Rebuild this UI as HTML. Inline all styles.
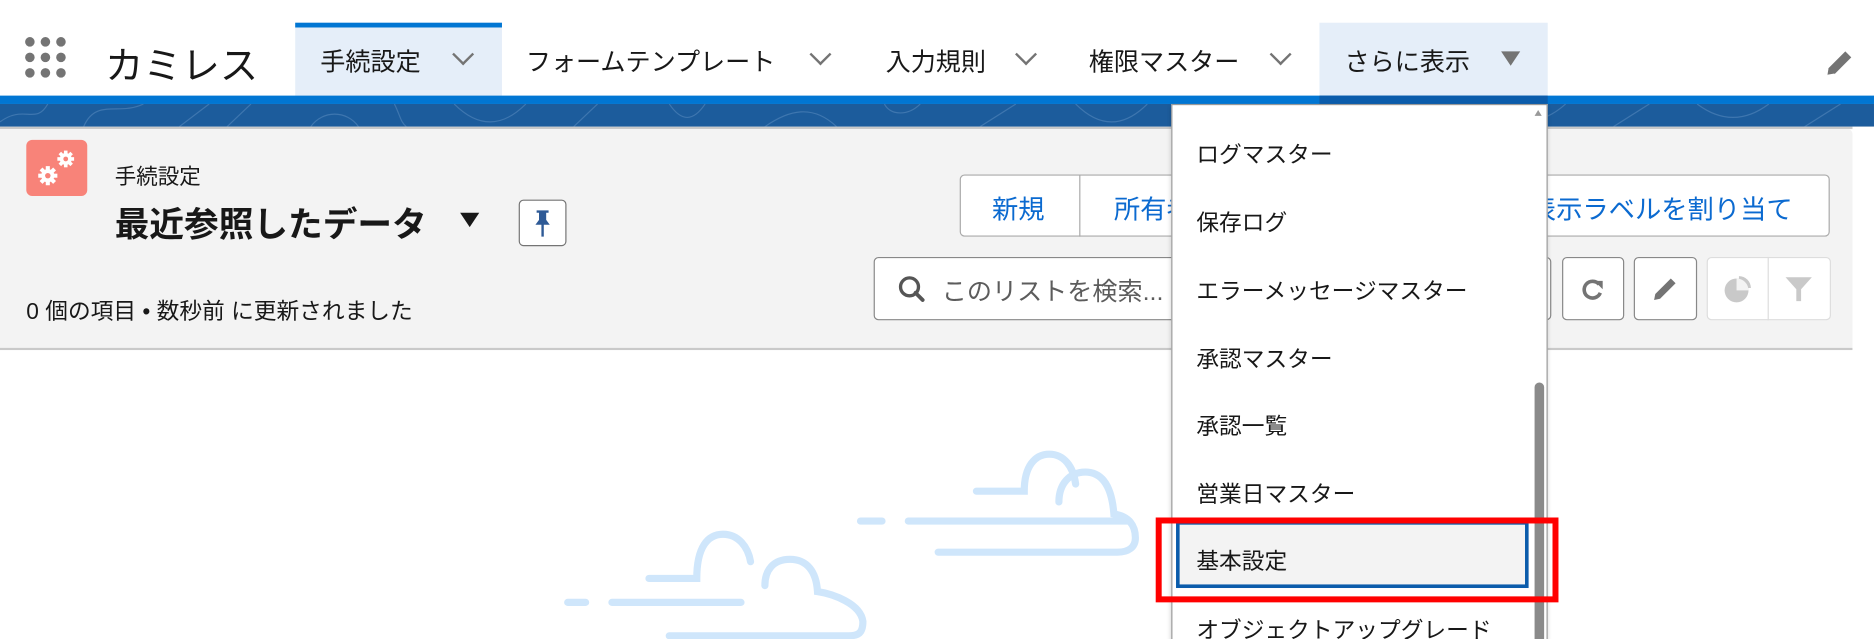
<!DOCTYPE html>
<html><head><meta charset="utf-8"><style>
html,body{margin:0;padding:0;width:1874px;height:639px;overflow:hidden;background:#fff}
#w{position:absolute;left:0;top:0;width:1568px;height:535px;overflow:hidden;transform:scale(1.19515);transform-origin:0 0;font-family:"Liberation Sans","Noto Sans CJK JP",sans-serif;color:#181818}
.a{position:absolute;white-space:nowrap}
.tab{position:absolute;top:36px;font-size:21px;color:#181818}
.chev{position:absolute;top:39px;width:11px;height:11px;border-right:2px solid #747474;border-bottom:2px solid #747474;transform:rotate(45deg)}
.btn{position:absolute;border:1px solid #c9c9c9;border-radius:4px;background:#fff;box-sizing:border-box}
.it{position:absolute;left:1001px;font-size:19px;color:#181818}
</style></head><body><div id="w">
<div class="a" style="left:0;top:0;width:1568px;height:80px;background:#fff"></div>
<svg class="a" style="left:20px;top:30px" width="40" height="40">
<g fill="#747474"><circle cx="5" cy="5" r="4"/><circle cx="18" cy="5" r="4"/><circle cx="31" cy="5" r="4"/><circle cx="5" cy="18" r="4"/><circle cx="18" cy="18" r="4"/><circle cx="31" cy="18" r="4"/><circle cx="5" cy="31" r="4"/><circle cx="18" cy="31" r="4"/><circle cx="31" cy="31" r="4"/></g></svg>
<div class="a" style="left:88px;top:30px;font-size:32px;color:#181818">カミレス</div>
<div class="a" style="left:247px;top:19px;width:173px;height:61px;background:#e5eef9;border-top:4px solid #0176d3;box-sizing:border-box"></div>
<div class="tab" style="left:268px">手続設定</div><div class="chev" style="left:381px"></div>
<div class="tab" style="left:440px">フォームテンプレート</div><div class="chev" style="left:680px"></div>
<div class="tab" style="left:741px">入力規則</div><div class="chev" style="left:852px"></div>
<div class="tab" style="left:911px">権限マスター</div><div class="chev" style="left:1065px"></div>
<div class="a" style="left:1104px;top:19px;width:191px;height:61px;background:#e5eef9"></div>
<div class="tab" style="left:1125px">さらに表示</div>
<div class="a" style="left:1256px;top:43px;width:0;height:0;border-left:8px solid transparent;border-right:8px solid transparent;border-top:12px solid #747474"></div>
<svg class="a" style="left:1526px;top:38px" width="28" height="28"><path d="M3 25 L4 19 L18 5 L23 10 L9 24 Z" fill="#747474"/><path d="M3 25 L9 24" stroke="#fff" stroke-width="1"/></svg>
<div class="a" style="left:0;top:80px;width:1568px;height:7px;background:#0176d3"></div>
<div class="a" style="left:1104px;top:80px;width:191px;height:7px;background:#0b5cab"></div>
<div class="a" style="left:0;top:87px;width:1568px;height:19px;background:#1c5c9c"></div>
<svg class="a" style="left:0;top:87px" width="1568" height="19"><g fill="none" stroke="#4d82b8" stroke-width="1" opacity=".7">
<path d="M0 15 C20 0 30 18 40 0 M70 19 C80 -5 100 10 120 0 M150 19 L175 0 M190 19 L210 0 M260 19 C270 5 290 5 300 19 M330 0 C335 10 335 15 340 19 M380 0 C400 20 420 20 440 0 M480 19 L500 0 M560 0 C570 15 580 15 590 0 M640 19 C660 5 680 0 700 19 M740 0 C745 10 760 10 770 0 M820 19 L850 0 M900 0 C920 20 940 20 960 0 M1000 19 L1020 0 M1080 19 C1100 0 1120 0 1140 19 M1190 0 L1200 19 M1250 0 C1270 18 1290 18 1310 0 M1350 19 L1380 0 M1420 0 C1440 15 1460 15 1480 0 M1510 19 L1540 0"/></g></svg>
<div class="a" style="left:0;top:106px;width:1568px;height:2px;background:#c9c9c9"></div>
<div class="a" style="left:0;top:108px;width:1550px;height:183px;background:#f3f3f3;border-bottom:2px solid #c9c9c9;border-top-right-radius:4px"></div>
<div class="a" style="left:1550px;top:106px;width:18px;height:187px;background:#fff"></div>
<div class="a" style="left:22px;top:117px;width:51px;height:47px;background:#f88379;border-radius:5px"></div>
<svg class="a" style="left:22px;top:117px" width="51" height="47" viewBox="0 0 51 47">
<g fill="#fff">
<g transform="translate(33,16)"><circle r="5"/><rect x="-1.5" y="-7" width="3" height="14"/><rect x="-7" y="-1.5" width="14" height="3"/><rect x="-1.5" y="-7" width="3" height="14" transform="rotate(45)"/><rect x="-1.5" y="-7" width="3" height="14" transform="rotate(-45)"/></g>
<g transform="translate(18,30)"><circle r="5.5"/><rect x="-1.7" y="-8" width="3.4" height="16"/><rect x="-8" y="-1.7" width="16" height="3.4"/><rect x="-1.7" y="-8" width="3.4" height="16" transform="rotate(45)"/><rect x="-1.7" y="-8" width="3.4" height="16" transform="rotate(-45)"/></g>
</g>
<circle cx="33" cy="16" r="2" fill="#f88379"/><circle cx="18" cy="30" r="2.3" fill="#f88379"/></svg>
<div class="a" style="left:96px;top:134px;font-size:18px">手続設定</div>
<div class="a" style="left:96px;top:165px;font-size:29px;font-weight:bold">最近参照したデータ</div>
<div class="a" style="left:385px;top:178px;width:0;height:0;border-left:8px solid transparent;border-right:8px solid transparent;border-top:12px solid #181818"></div>
<div class="btn" style="left:434px;top:167px;width:40px;height:39px;border-color:#747474"></div>
<svg class="a" style="left:444px;top:174px" width="20" height="26"><path d="M5 2h10v2h-2v6l3 4H4l3-4V4H5z M9 14h2v10H9z" fill="#2e5a96"/></svg>
<div class="a" style="left:22px;top:246px;font-size:19px">0 個の項目 • 数秒前 に更新されました</div>
<div class="btn" style="left:803px;top:146px;width:728px;height:52px;border-color:#aaa"></div>
<div class="a" style="left:903px;top:146px;width:1px;height:52px;background:#aaa"></div>
<div class="a" style="left:830px;top:158px;font-size:22px;color:#0b6ad0">新規</div>
<div class="a" style="left:932px;top:158px;font-size:22px;color:#0b6ad0">所有者</div>
<div class="a" style="left:1280px;top:158px;font-size:22px;color:#0b6ad0">表示ラベルを割り当て</div>
<div class="btn" style="left:731px;top:215px;width:567px;height:53px;border-color:#888"></div>
<svg class="a" style="left:750px;top:229px" width="26" height="26"><circle cx="11" cy="11" r="7.5" fill="none" stroke="#555" stroke-width="2.8"/><path d="M16 16l6 6" stroke="#555" stroke-width="3.2" stroke-linecap="round"/></svg>
<div class="a" style="left:788px;top:228px;font-size:21px;color:#5c5c5c">このリストを検索...</div>
<div class="btn" style="left:1307px;top:215px;width:52px;height:53px;border-color:#888"></div>
<svg class="a" style="left:1320px;top:229px" width="26" height="26"><path d="M18 9 A7 7 0 1 0 19 16" fill="none" stroke="#747474" stroke-width="3"/><path d="M14 6h7v7z" fill="#747474"/></svg>
<div class="btn" style="left:1367px;top:215px;width:53px;height:53px;border-color:#888"></div>
<svg class="a" style="left:1381px;top:228px" width="26" height="26"><path d="M3 23 L4 18 L17 5 L21 9 L8 22 Z" fill="#747474"/></svg>
<div class="btn" style="left:1428px;top:215px;width:104px;height:53px;border-color:#ddd"></div>
<div class="a" style="left:1479px;top:215px;width:1px;height:53px;background:#ddd"></div>
<svg class="a" style="left:1441px;top:229px" width="26" height="26"><circle cx="12" cy="14" r="10" fill="#c9c9c9"/><path d="M14 12V2a10 10 0 0 1 10 10z" fill="#c9c9c9"/><path d="M12 14V4a10 10 0 0 1 10 10z" fill="#f3f3f3"/></svg>
<svg class="a" style="left:1492px;top:229px" width="26" height="26"><path d="M2 3h22l-9 10v10h-4v-10z" fill="#c9c9c9"/></svg>
<svg class="a" style="left:0;top:0" width="1568" height="535"><g fill="none" stroke="#cfe6fb" stroke-width="6" stroke-linecap="round">
<path d="M817 411H857C857 390 866 380 878 380C890 380 898 390 900 405"/>
<path d="M886 420C886 405 895 395 908 395C921 395 930 405 932 430C945 432 950 440 950 450C950 458 944 462 935 462H785"/>
<path d="M720 436H738M760 436H945"/>
<path d="M543 484H583C583 458 592 447 605 447C618 447 626 458 628 470"/>
<path d="M640 490C640 477 647 468 661 468C675 468 683 478 684 495C697 497 720 505 722 520C722 530 718 532 710 532H560"/>
<path d="M475 504H490M512 504H620"/></g></svg>
<div class="a" style="left:980px;top:87px;width:315px;height:460px;background:#fff;border:1px solid #999;box-sizing:border-box;box-shadow:0 2px 4px rgba(0,0,0,.2)"></div>
<div class="a" style="left:1284px;top:92px;width:0;height:0;border-left:3px solid transparent;border-right:3px solid transparent;border-bottom:5px solid #999"></div>
<div class="a" style="left:1284px;top:320px;width:8px;height:220px;background:#8a8a8a;border-radius:4px"></div>
<div class="it" style="top:115px">ログマスター</div>
<div class="it" style="top:172px">保存ログ</div>
<div class="it" style="top:229px">エラーメッセージマスター</div>
<div class="it" style="top:286px">承認マスター</div>
<div class="it" style="top:342px">承認一覧</div>
<div class="it" style="top:399px">営業日マスター</div>
<div class="a" style="left:984px;top:436px;width:295px;height:56px;background:#f3f3f3;border:3px solid #0b5cab;box-sizing:border-box"></div>
<div class="it" style="top:455px">基本設定</div>
<div class="it" style="top:513px">オブジェクトアップグレード</div>
<div class="a" style="left:967px;top:433px;width:337px;height:71px;border:5px solid #f00;box-sizing:border-box"></div>
</div></body></html>
